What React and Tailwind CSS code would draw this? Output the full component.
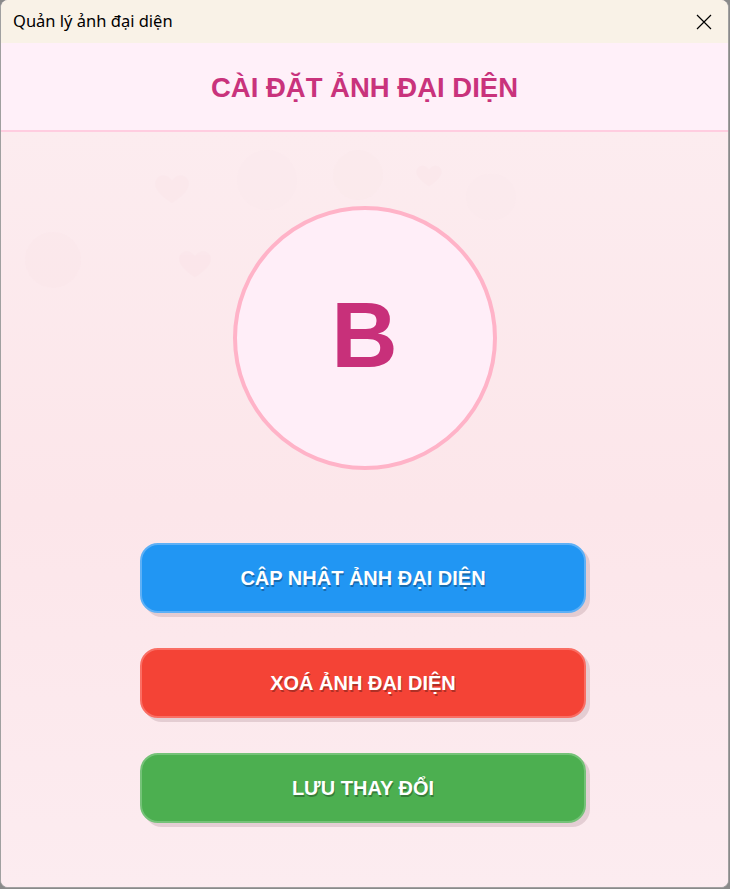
import React from 'react';

const Heart = ({ className }) => (
  <svg viewBox="0 0 24 24" className={className} fill="currentColor">
    <path d="M12 21s-7.5-4.6-9.6-9.2C.9 8.4 3 4.5 6.8 4.5c2.2 0 3.6 1.2 5.2 3 1.6-1.8 3-3 5.2-3 3.8 0 5.9 3.9 4.4 7.3C19.5 16.4 12 21 12 21z" />
  </svg>
);

const ActionButton = ({ label, colors }) => (
  <button
    className={`w-[446px] h-[70px] rounded-[18px] border-2 text-white text-[20px] font-bold shadow-[4px_4px_0_rgba(120,80,90,0.18)] [text-shadow:1px_1.5px_0_rgba(0,0,0,0.28)] ${colors}`}
  >
    {label}
  </button>
);

const App = () => {
  return (
    <div className="w-[730px] h-[889px] bg-[#8a8a8a] font-['Liberation_Sans',Arial,sans-serif]">
      <div className="w-[729px] h-[888px] flex flex-col rounded-[8px] overflow-hidden border-l border-r border-b border-[#a0a0a0] bg-[#fce9ee]">
        {/* title bar */}
        <div className="h-[43px] shrink-0 bg-[#f9f2e7] flex items-center justify-between pl-[12px] pr-[16px]">
          <span className="font-['Noto_Sans','Open_Sans',sans-serif] text-[16.5px] text-black">Quản lý ảnh đại diện</span>
          <svg width="16" height="16" viewBox="0 0 16 16" className="text-black">
            <path d="M1 1 L15 15 M15 1 L1 15" stroke="currentColor" strokeWidth="1.2" />
          </svg>
        </div>

        {/* header */}
        <div className="h-[89px] shrink-0 bg-[#fff0f9] border-b-2 border-[#ffcde0] flex items-center justify-center pt-[3px]">
          <h1 className="text-[27.5px] font-bold text-[#c9337c]">CÀI ĐẶT ẢNH ĐẠI DIỆN</h1>
        </div>

        {/* body */}
        <div className="relative flex-1 bg-gradient-to-b from-[#fcecef] via-[#fce6ea] to-[#fcecf0] flex flex-col items-center pt-[74px]">
          <Heart className="absolute left-[148px] top-[36px] w-[46px] h-[40px] text-[#f9dde4] opacity-20" />
          <Heart className="absolute left-[172px] top-[112px] w-[44px] h-[38px] text-[#f9dbe3] opacity-20" />
          <Heart className="absolute left-[410px] top-[28px] w-[36px] h-[30px] text-[#f9dde4] opacity-20" />
          <div className="absolute left-[236px] top-[18px] w-[60px] h-[60px] rounded-full bg-[#fbe6eb] opacity-15" />
          <div className="absolute left-[332px] top-[18px] w-[50px] h-[50px] rounded-full bg-[#f9e1e7] opacity-15" />
          <div className="absolute left-[465px] top-[42px] w-[50px] h-[46px] rounded-full bg-[#fbe5ea] opacity-15" />
          <div className="absolute left-[24px] top-[100px] w-[56px] h-[56px] rounded-full bg-[#fae0e6] opacity-15" />

          <div className="relative w-[264px] h-[264px] rounded-full border-4 border-[#ffb3c8] bg-[#ffeef8] flex items-center justify-center">
            <span className="text-[92px] font-bold leading-none text-[#c8307a] mt-[-6px]">B</span>
          </div>

          <div className="relative flex flex-col gap-[35px] mt-[73px] mr-[3px]">
            <ActionButton label="CẬP NHẬT ẢNH ĐẠI DIỆN" colors="bg-[#2196f3] border-[#5eb0f6]" />
            <ActionButton label="XOÁ ẢNH ĐẠI DIỆN" colors="bg-[#f44336] border-[#fa6e64]" />
            <ActionButton label="LƯU THAY ĐỔI" colors="bg-[#4caf50] border-[#75c278]" />
          </div>
        </div>
      </div>
    </div>
  );
};

export default App;
